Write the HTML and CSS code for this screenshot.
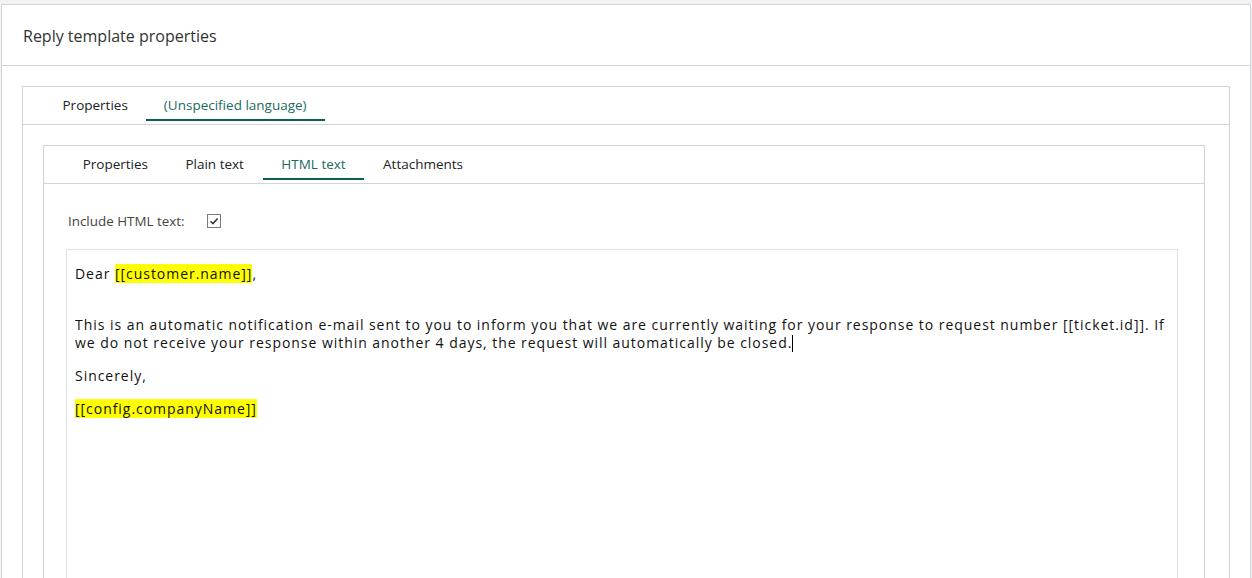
FILE: index.html
```html
<!DOCTYPE html>
<html>
<head>
<meta charset="utf-8">
<link rel="stylesheet" href="styles.css">
</head>
<body>
<div class="panel">
  <div class="panel-header">Reply template properties</div>
  <div class="panel-body">
    <div class="tabbox outer">
      <div class="tabbar outer-bar">
        <div class="tab">Properties</div>
        <div class="tab active">(Unspecified language)</div>
      </div>
      <div class="tabcontent outer-content">
        <div class="tabbox inner">
          <div class="tabbar inner-bar">
            <div class="tab">Properties</div>
            <div class="tab">Plain text</div>
            <div class="tab active">HTML text</div>
            <div class="tab">Attachments</div>
          </div>
          <div class="tabcontent inner-content">
            <div class="field">
              <span class="label">Include HTML text:</span>
              <span class="checkbox">
                <svg width="14" height="14" viewBox="0 0 14 14"><path d="M3.5 7.2 L6 9.6 L10.6 4.4" fill="none" stroke="#333" stroke-width="1.5"/></svg>
              </span>
            </div>
            <div class="editor">
              <p>Dear <span class="hl">[[customer.name]]</span>,<br>&nbsp;</p>
              <p>This is an automatic notification e-mail sent to you to inform you that we are currently waiting for your response to request number [[ticket.id]]. If we do not receive your response within another 4 days, the request will automatically be closed.<span class="caret"></span></p>
              <p>Sincerely,</p>
              <p><span class="hl">[[config.companyName]]</span></p>
            </div>
          </div>
        </div>
      </div>
    </div>
  </div>
</div>
</body>
</html>
```
FILE: styles.css
```css
html, body {
  margin: 0;
  padding: 0;
  height: 100%;
  overflow: hidden;
  background: #f3f3f3;
  font-family: "Open Sans", "Liberation Sans", sans-serif;
  color: #333;
}
.panel {
  margin: 4px 1px 0 1px;
  border: 1px solid #cfd5d5;
  border-bottom: none;
  background: #fff;
  height: 700px;
}
.panel-header {
  height: 60px;
  line-height: 63px;
  padding-left: 21px;
  font-size: 16px;
  color: #333;
  border-bottom: 1px solid #cfd5d5;
}
.panel-body {
  padding: 20px 20px 0 20px;
}
.tabbox {
  border: 1px solid #cfd5d5;
  border-bottom: none;
  background: #fff;
}
.tabbar {
  display: flex;
  height: 37px;
  border-bottom: 1px solid #cfd5d5;
  align-items: stretch;
}
.outer-bar {
  padding-left: 21.5px;
}
.inner-bar {
  padding-left: 20px;
}
.tab {
  font-size: 13.5px;
  color: #222;
  display: flex;
  align-items: center;
  margin-bottom: 3px;
  border-bottom: 2px solid transparent;
  padding-top: 4px;
}
.outer-bar .tab {
  padding-left: 18px;
  padding-right: 18px;
}
.inner-bar .tab {
  padding-left: 18.7px;
  padding-right: 18.7px;
}
.tab.active {
  color: #1c6b5f;
  border-bottom-color: #0f5e52;
}
.outer-content {
  padding: 20px 24px 0 20px;
}
.inner-content {
  padding: 0 26px 0 22px;
}
.field {
  display: flex;
  align-items: center;
  box-sizing: border-box;
  height: 65px;
  padding-top: 9px;
  padding-left: 2px;
}
.label {
  font-size: 13.4px;
  color: #444;
  margin-right: 22px;
}
.checkbox {
  width: 14px;
  height: 14px;
  border: 1px solid #7a7a7a;
  box-sizing: border-box;
  display: inline-flex;
  align-items: center;
  justify-content: center;
  background: #fff;
}
.checkbox svg {
  display: block;
  flex: none;
}
.editor {
  border: 1px solid #dde2e2;
  border-bottom: none;
  min-height: 400px;
  padding: 0 8px;
  font-family: "Open Sans", sans-serif;
  font-size: 14px;
  letter-spacing: 0.96px;
  line-height: 18px;
  color: #111;
}
.editor p {
  margin: 15px 0 15px 0;
}
.hl {
  background: #ffff00;
}
.caret {
  display: inline-block;
  width: 1px;
  height: 17px;
  background: #000;
  vertical-align: -4px;
}
```
